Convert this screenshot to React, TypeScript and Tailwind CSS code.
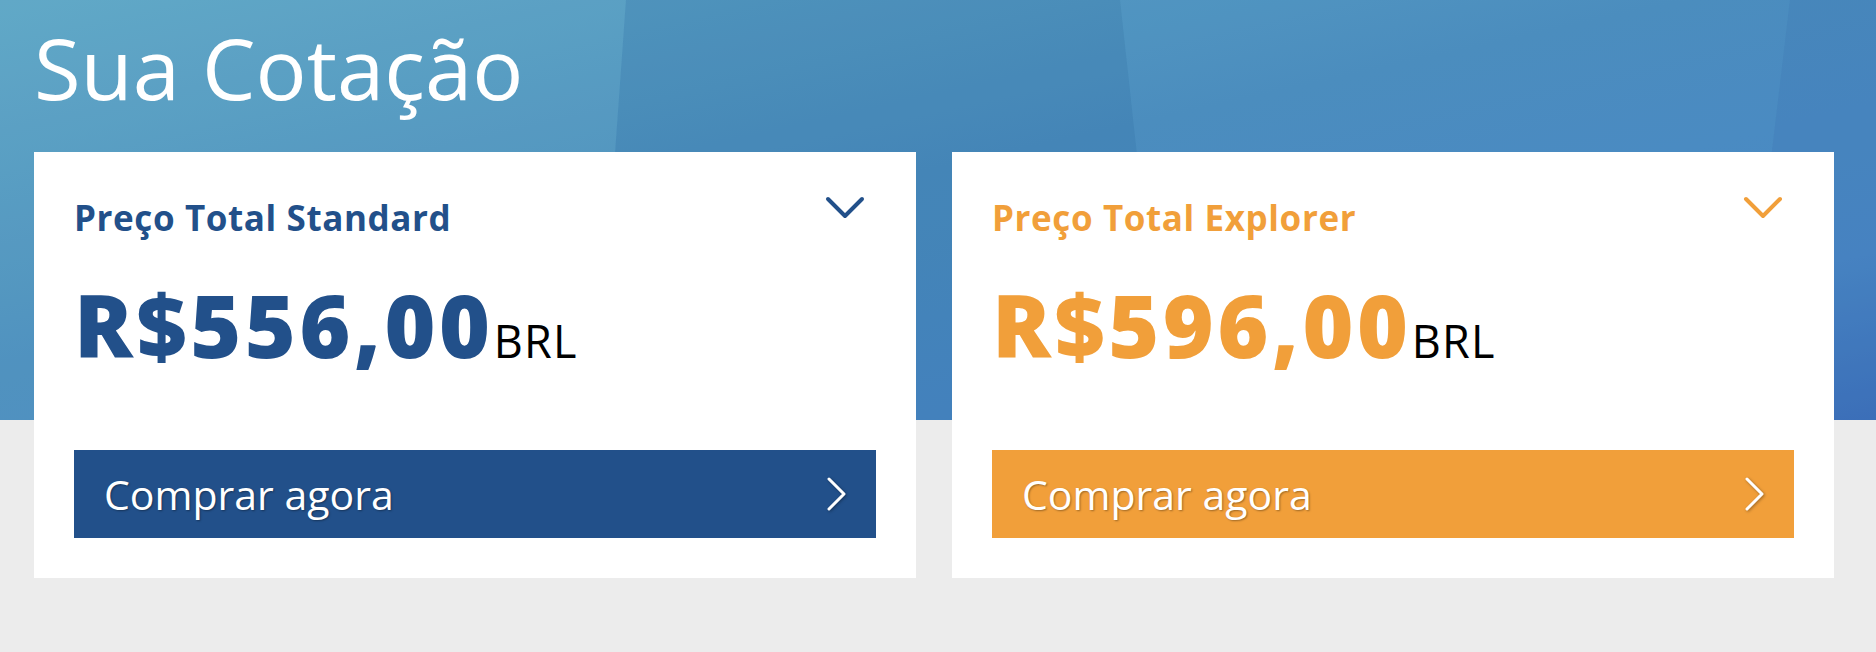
import React from 'react';

type Tone = 'blue' | 'orange';

interface Plan {
  title: string;
  amount: string;
  tone: Tone;
}

const plans: Plan[] = [
  { title: 'Preço Total Standard', amount: 'R$556,00', tone: 'blue' },
  { title: 'Preço Total Explorer', amount: 'R$596,00', tone: 'orange' },
];

const tones: Record<Tone, { text: string; bg: string; stroke: string }> = {
  blue: { text: 'text-[#22508a]', bg: 'bg-[#22508a]', stroke: '#22508a' },
  orange: { text: 'text-[#f19f3a]', bg: 'bg-[#f19f3a]', stroke: '#f19f3a' },
};

// Faceted blue backdrop behind the heading
const HeaderBackdrop: React.FC = () => (
  <svg
    className="absolute inset-x-0 top-0 h-[420px] w-full"
    viewBox="0 0 1876 420"
    preserveAspectRatio="none"
    aria-hidden
  >
    <defs>
      <linearGradient id="hdr-base" x1="0" y1="0" x2="1" y2="1">
        <stop offset="0" stopColor="#5ea6c5" />
        <stop offset="0.45" stopColor="#4a8cbc" />
        <stop offset="0.8" stopColor="#4886c4" />
        <stop offset="1" stopColor="#3a6cb9" />
      </linearGradient>
    </defs>
    <rect width="1876" height="420" fill="url(#hdr-base)" />
    <polygon points="626,0 1120,0 1166,420 596,420" fill="#2f6c9f" opacity="0.18" />
    <polygon points="0,0 626,0 596,420 0,420" fill="#7bbad6" opacity="0.12" />
    <polygon points="1120,0 1790,0 1740,420 1166,420" fill="#5aa0d8" opacity="0.1" />
    <polygon points="1790,0 1876,0 1876,420 1740,420" fill="#3f78b8" opacity="0.25" />
  </svg>
);

const ChevronDown: React.FC<{ color: string }> = ({ color }) => (
  <svg width="40" height="24" viewBox="0 0 40 24" className="mr-[11px] mt-1 shrink-0" aria-hidden>
    <polyline
      points="3,3 20,20 37,3"
      fill="none"
      stroke={color}
      strokeWidth="4"
      strokeLinecap="round"
      strokeLinejoin="round"
    />
  </svg>
);

const ChevronRight: React.FC = () => (
  <svg
    width="20"
    height="34"
    viewBox="0 0 20 34"
    className="drop-shadow-[1px_1px_1.5px_rgba(0,0,0,0.35)]"
    aria-hidden
  >
    <polyline
      points="3,2 18,17 3,32"
      fill="none"
      stroke="#fff"
      strokeWidth="3"
      strokeLinecap="round"
      strokeLinejoin="round"
    />
  </svg>
);

const PriceCard: React.FC<{ plan: Plan }> = ({ plan }) => {
  const tone = tones[plan.tone];
  return (
    <div className="flex h-[426px] w-[882px] flex-col bg-white p-10">
      <div className="flex items-start justify-between">
        <h2
          className={`mt-[8px] text-[35px] font-bold leading-none tracking-[0.6px] ${tone.text}`}
        >
          {plan.title}
        </h2>
        <ChevronDown color={tone.stroke} />
      </div>

      <div className="mt-[46px] flex items-baseline">
        <span className={`text-[87px] font-extrabold leading-none tracking-[3.6px] ${tone.text}`}>
          {plan.amount}
        </span>
        <span className="text-[45px] leading-none tracking-[1.2px] text-black">BRL</span>
      </div>

      <button
        className={`mt-[82px] flex h-[88px] w-full items-center justify-between pl-[30px] pr-[30px] ${tone.bg}`}
      >
        <span className="text-[41px] leading-none text-white [text-shadow:1px_1px_2px_rgba(0,0,0,0.35)]">
          Comprar agora
        </span>
        <ChevronRight />
      </button>
    </div>
  );
};

export default function App() {
  return (
    <div className="relative min-h-[652px] overflow-hidden bg-[#ececec] font-['Open_Sans','Noto_Sans',sans-serif]">
      <HeaderBackdrop />
      <div className="relative px-[34px] pt-[25px]">
        <h1 className="text-[85px] font-normal leading-none text-white">Sua Cotação</h1>
        <div className="mt-[42px] flex gap-9">
          {plans.map((plan) => (
            <PriceCard key={plan.title} plan={plan} />
          ))}
        </div>
      </div>
    </div>
  );
}
